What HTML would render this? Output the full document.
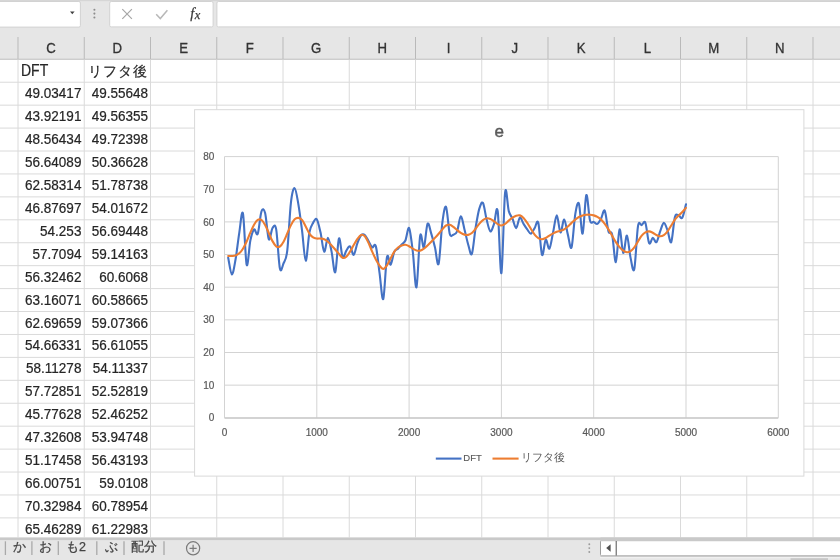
<!DOCTYPE html><html><head><meta charset="utf-8"><style>html,body{margin:0;padding:0;background:#fff;overflow:hidden}svg{display:block;filter:blur(0.3px)}text{font-family:"Liberation Sans", sans-serif}</style></head><body>
<svg width="840" height="560" viewBox="0 0 840 560">
<rect x="0" y="0" width="840" height="560" fill="#ffffff"/>
<rect x="0" y="0" width="840" height="59" fill="#e6e6e6"/>
<rect x="0" y="0" width="840" height="1.2" fill="#d6d6d6"/>
<rect x="-3" y="1.5" width="83.4" height="25.6" rx="1.5" fill="#ffffff" stroke="#d2d2d2" stroke-width="1"/>
<path d="M70,11.6 L74.6,11.6 L72.3,14.3 Z" fill="#404040"/>
<circle cx="94.4" cy="9.8" r="1.05" fill="#8c8c8c"/>
<circle cx="94.4" cy="13.6" r="1.05" fill="#8c8c8c"/>
<circle cx="94.4" cy="17.5" r="1.05" fill="#8c8c8c"/>
<rect x="109.7" y="1.5" width="103.4" height="25.4" rx="1.5" fill="#ffffff" stroke="#d2d2d2" stroke-width="1"/>
<path d="M122.3,9.2 L131.9,18.8 M131.9,9.2 L122.3,18.8" stroke="#a6a6a6" stroke-width="1.2" fill="none"/>
<path d="M156.2,14.3 L160.3,18.6 L167.4,10.2" stroke="#b8b8b8" stroke-width="1.5" fill="none"/>
<text x="190.2" y="18.0" font-size="14.5" font-style="italic" fill="#3a3a3a" stroke="#3a3a3a" stroke-width="0.25" style="font-family:'Liberation Serif',serif">f<tspan font-size="12.5" dx="0.6" dy="0.6">x</tspan></text>
<rect x="216.9" y="1.5" width="640" height="25.4" rx="1.5" fill="#ffffff" stroke="#d2d2d2" stroke-width="1"/>
<line x1="18.00" y1="37.0" x2="18.00" y2="59.2" stroke="#b9b9b9" stroke-width="1"/>
<line x1="84.25" y1="37.0" x2="84.25" y2="59.2" stroke="#b9b9b9" stroke-width="1"/>
<line x1="150.50" y1="37.0" x2="150.50" y2="59.2" stroke="#b9b9b9" stroke-width="1"/>
<line x1="216.75" y1="37.0" x2="216.75" y2="59.2" stroke="#b9b9b9" stroke-width="1"/>
<line x1="283.00" y1="37.0" x2="283.00" y2="59.2" stroke="#b9b9b9" stroke-width="1"/>
<line x1="349.25" y1="37.0" x2="349.25" y2="59.2" stroke="#b9b9b9" stroke-width="1"/>
<line x1="415.50" y1="37.0" x2="415.50" y2="59.2" stroke="#b9b9b9" stroke-width="1"/>
<line x1="481.75" y1="37.0" x2="481.75" y2="59.2" stroke="#b9b9b9" stroke-width="1"/>
<line x1="548.00" y1="37.0" x2="548.00" y2="59.2" stroke="#b9b9b9" stroke-width="1"/>
<line x1="614.25" y1="37.0" x2="614.25" y2="59.2" stroke="#b9b9b9" stroke-width="1"/>
<line x1="680.50" y1="37.0" x2="680.50" y2="59.2" stroke="#b9b9b9" stroke-width="1"/>
<line x1="746.75" y1="37.0" x2="746.75" y2="59.2" stroke="#b9b9b9" stroke-width="1"/>
<line x1="813.00" y1="37.0" x2="813.00" y2="59.2" stroke="#b9b9b9" stroke-width="1"/>
<text transform="translate(51.12,52.9) scale(1,1.12)" x="0" y="0" font-size="13.2" text-anchor="middle" fill="#333333" stroke="#333333" stroke-width="0.3">C</text>
<text transform="translate(117.38,52.9) scale(1,1.12)" x="0" y="0" font-size="13.2" text-anchor="middle" fill="#333333" stroke="#333333" stroke-width="0.3">D</text>
<text transform="translate(183.62,52.9) scale(1,1.12)" x="0" y="0" font-size="13.2" text-anchor="middle" fill="#333333" stroke="#333333" stroke-width="0.3">E</text>
<text transform="translate(249.88,52.9) scale(1,1.12)" x="0" y="0" font-size="13.2" text-anchor="middle" fill="#333333" stroke="#333333" stroke-width="0.3">F</text>
<text transform="translate(316.12,52.9) scale(1,1.12)" x="0" y="0" font-size="13.2" text-anchor="middle" fill="#333333" stroke="#333333" stroke-width="0.3">G</text>
<text transform="translate(382.38,52.9) scale(1,1.12)" x="0" y="0" font-size="13.2" text-anchor="middle" fill="#333333" stroke="#333333" stroke-width="0.3">H</text>
<text transform="translate(448.62,52.9) scale(1,1.12)" x="0" y="0" font-size="13.2" text-anchor="middle" fill="#333333" stroke="#333333" stroke-width="0.3">I</text>
<text transform="translate(514.88,52.9) scale(1,1.12)" x="0" y="0" font-size="13.2" text-anchor="middle" fill="#333333" stroke="#333333" stroke-width="0.3">J</text>
<text transform="translate(581.12,52.9) scale(1,1.12)" x="0" y="0" font-size="13.2" text-anchor="middle" fill="#333333" stroke="#333333" stroke-width="0.3">K</text>
<text transform="translate(647.38,52.9) scale(1,1.12)" x="0" y="0" font-size="13.2" text-anchor="middle" fill="#333333" stroke="#333333" stroke-width="0.3">L</text>
<text transform="translate(713.62,52.9) scale(1,1.12)" x="0" y="0" font-size="13.2" text-anchor="middle" fill="#333333" stroke="#333333" stroke-width="0.3">M</text>
<text transform="translate(779.88,52.9) scale(1,1.12)" x="0" y="0" font-size="13.2" text-anchor="middle" fill="#333333" stroke="#333333" stroke-width="0.3">N</text>
<line x1="0" y1="59.20" x2="840" y2="59.20" stroke="#bdbdbd" stroke-width="1.1"/>
<line x1="0" y1="82.23" x2="840" y2="82.23" stroke="#dadada" stroke-width="1"/>
<line x1="0" y1="105.16" x2="840" y2="105.16" stroke="#dadada" stroke-width="1"/>
<line x1="0" y1="128.09" x2="840" y2="128.09" stroke="#dadada" stroke-width="1"/>
<line x1="0" y1="151.02" x2="840" y2="151.02" stroke="#dadada" stroke-width="1"/>
<line x1="0" y1="173.95" x2="840" y2="173.95" stroke="#dadada" stroke-width="1"/>
<line x1="0" y1="196.88" x2="840" y2="196.88" stroke="#dadada" stroke-width="1"/>
<line x1="0" y1="219.81" x2="840" y2="219.81" stroke="#dadada" stroke-width="1"/>
<line x1="0" y1="242.74" x2="840" y2="242.74" stroke="#dadada" stroke-width="1"/>
<line x1="0" y1="265.67" x2="840" y2="265.67" stroke="#dadada" stroke-width="1"/>
<line x1="0" y1="288.60" x2="840" y2="288.60" stroke="#dadada" stroke-width="1"/>
<line x1="0" y1="311.53" x2="840" y2="311.53" stroke="#dadada" stroke-width="1"/>
<line x1="0" y1="334.46" x2="840" y2="334.46" stroke="#dadada" stroke-width="1"/>
<line x1="0" y1="357.39" x2="840" y2="357.39" stroke="#dadada" stroke-width="1"/>
<line x1="0" y1="380.32" x2="840" y2="380.32" stroke="#dadada" stroke-width="1"/>
<line x1="0" y1="403.25" x2="840" y2="403.25" stroke="#dadada" stroke-width="1"/>
<line x1="0" y1="426.18" x2="840" y2="426.18" stroke="#dadada" stroke-width="1"/>
<line x1="0" y1="449.11" x2="840" y2="449.11" stroke="#dadada" stroke-width="1"/>
<line x1="0" y1="472.04" x2="840" y2="472.04" stroke="#dadada" stroke-width="1"/>
<line x1="0" y1="494.97" x2="840" y2="494.97" stroke="#dadada" stroke-width="1"/>
<line x1="0" y1="517.90" x2="840" y2="517.90" stroke="#dadada" stroke-width="1"/>
<line x1="18.00" y1="59.70" x2="18.00" y2="537.50" stroke="#dadada" stroke-width="1"/>
<line x1="84.25" y1="59.70" x2="84.25" y2="537.50" stroke="#dadada" stroke-width="1"/>
<line x1="150.50" y1="59.70" x2="150.50" y2="537.50" stroke="#dadada" stroke-width="1"/>
<line x1="216.75" y1="59.70" x2="216.75" y2="537.50" stroke="#dadada" stroke-width="1"/>
<line x1="283.00" y1="59.70" x2="283.00" y2="537.50" stroke="#dadada" stroke-width="1"/>
<line x1="349.25" y1="59.70" x2="349.25" y2="537.50" stroke="#dadada" stroke-width="1"/>
<line x1="415.50" y1="59.70" x2="415.50" y2="537.50" stroke="#dadada" stroke-width="1"/>
<line x1="481.75" y1="59.70" x2="481.75" y2="537.50" stroke="#dadada" stroke-width="1"/>
<line x1="548.00" y1="59.70" x2="548.00" y2="537.50" stroke="#dadada" stroke-width="1"/>
<line x1="614.25" y1="59.70" x2="614.25" y2="537.50" stroke="#dadada" stroke-width="1"/>
<line x1="680.50" y1="59.70" x2="680.50" y2="537.50" stroke="#dadada" stroke-width="1"/>
<line x1="746.75" y1="59.70" x2="746.75" y2="537.50" stroke="#dadada" stroke-width="1"/>
<line x1="813.00" y1="59.70" x2="813.00" y2="537.50" stroke="#dadada" stroke-width="1"/>
<text transform="translate(21.0,75.70) scale(1,1.13)" font-size="14" fill="#262626" stroke="#262626" stroke-width="0.2">DFT</text>
<text x="88.0" y="75.90" font-size="13.5" letter-spacing="0.9" fill="#262626" stroke="#262626" stroke-width="0.2">リフタ後</text>
<text transform="translate(81.4,98.23) scale(0.965,1)" font-size="14" text-anchor="end" fill="#262626" stroke="#262626" stroke-width="0.22">49.03417</text>
<text transform="translate(148.1,98.23) scale(0.965,1)" font-size="14" text-anchor="end" fill="#262626" stroke="#262626" stroke-width="0.22">49.55648</text>
<text transform="translate(81.4,121.16) scale(0.965,1)" font-size="14" text-anchor="end" fill="#262626" stroke="#262626" stroke-width="0.22">43.92191</text>
<text transform="translate(148.1,121.16) scale(0.965,1)" font-size="14" text-anchor="end" fill="#262626" stroke="#262626" stroke-width="0.22">49.56355</text>
<text transform="translate(81.4,144.09) scale(0.965,1)" font-size="14" text-anchor="end" fill="#262626" stroke="#262626" stroke-width="0.22">48.56434</text>
<text transform="translate(148.1,144.09) scale(0.965,1)" font-size="14" text-anchor="end" fill="#262626" stroke="#262626" stroke-width="0.22">49.72398</text>
<text transform="translate(81.4,167.02) scale(0.965,1)" font-size="14" text-anchor="end" fill="#262626" stroke="#262626" stroke-width="0.22">56.64089</text>
<text transform="translate(148.1,167.02) scale(0.965,1)" font-size="14" text-anchor="end" fill="#262626" stroke="#262626" stroke-width="0.22">50.36628</text>
<text transform="translate(81.4,189.95) scale(0.965,1)" font-size="14" text-anchor="end" fill="#262626" stroke="#262626" stroke-width="0.22">62.58314</text>
<text transform="translate(148.1,189.95) scale(0.965,1)" font-size="14" text-anchor="end" fill="#262626" stroke="#262626" stroke-width="0.22">51.78738</text>
<text transform="translate(81.4,212.88) scale(0.965,1)" font-size="14" text-anchor="end" fill="#262626" stroke="#262626" stroke-width="0.22">46.87697</text>
<text transform="translate(148.1,212.88) scale(0.965,1)" font-size="14" text-anchor="end" fill="#262626" stroke="#262626" stroke-width="0.22">54.01672</text>
<text transform="translate(81.4,235.81) scale(0.965,1)" font-size="14" text-anchor="end" fill="#262626" stroke="#262626" stroke-width="0.22">54.253</text>
<text transform="translate(148.1,235.81) scale(0.965,1)" font-size="14" text-anchor="end" fill="#262626" stroke="#262626" stroke-width="0.22">56.69448</text>
<text transform="translate(81.4,258.74) scale(0.965,1)" font-size="14" text-anchor="end" fill="#262626" stroke="#262626" stroke-width="0.22">57.7094</text>
<text transform="translate(148.1,258.74) scale(0.965,1)" font-size="14" text-anchor="end" fill="#262626" stroke="#262626" stroke-width="0.22">59.14163</text>
<text transform="translate(81.4,281.67) scale(0.965,1)" font-size="14" text-anchor="end" fill="#262626" stroke="#262626" stroke-width="0.22">56.32462</text>
<text transform="translate(148.1,281.67) scale(0.965,1)" font-size="14" text-anchor="end" fill="#262626" stroke="#262626" stroke-width="0.22">60.6068</text>
<text transform="translate(81.4,304.60) scale(0.965,1)" font-size="14" text-anchor="end" fill="#262626" stroke="#262626" stroke-width="0.22">63.16071</text>
<text transform="translate(148.1,304.60) scale(0.965,1)" font-size="14" text-anchor="end" fill="#262626" stroke="#262626" stroke-width="0.22">60.58665</text>
<text transform="translate(81.4,327.53) scale(0.965,1)" font-size="14" text-anchor="end" fill="#262626" stroke="#262626" stroke-width="0.22">62.69659</text>
<text transform="translate(148.1,327.53) scale(0.965,1)" font-size="14" text-anchor="end" fill="#262626" stroke="#262626" stroke-width="0.22">59.07366</text>
<text transform="translate(81.4,350.46) scale(0.965,1)" font-size="14" text-anchor="end" fill="#262626" stroke="#262626" stroke-width="0.22">54.66331</text>
<text transform="translate(148.1,350.46) scale(0.965,1)" font-size="14" text-anchor="end" fill="#262626" stroke="#262626" stroke-width="0.22">56.61055</text>
<text transform="translate(81.4,373.39) scale(0.965,1)" font-size="14" text-anchor="end" fill="#262626" stroke="#262626" stroke-width="0.22">58.11278</text>
<text transform="translate(148.1,373.39) scale(0.965,1)" font-size="14" text-anchor="end" fill="#262626" stroke="#262626" stroke-width="0.22">54.11337</text>
<text transform="translate(81.4,396.32) scale(0.965,1)" font-size="14" text-anchor="end" fill="#262626" stroke="#262626" stroke-width="0.22">57.72851</text>
<text transform="translate(148.1,396.32) scale(0.965,1)" font-size="14" text-anchor="end" fill="#262626" stroke="#262626" stroke-width="0.22">52.52819</text>
<text transform="translate(81.4,419.25) scale(0.965,1)" font-size="14" text-anchor="end" fill="#262626" stroke="#262626" stroke-width="0.22">45.77628</text>
<text transform="translate(148.1,419.25) scale(0.965,1)" font-size="14" text-anchor="end" fill="#262626" stroke="#262626" stroke-width="0.22">52.46252</text>
<text transform="translate(81.4,442.18) scale(0.965,1)" font-size="14" text-anchor="end" fill="#262626" stroke="#262626" stroke-width="0.22">47.32608</text>
<text transform="translate(148.1,442.18) scale(0.965,1)" font-size="14" text-anchor="end" fill="#262626" stroke="#262626" stroke-width="0.22">53.94748</text>
<text transform="translate(81.4,465.11) scale(0.965,1)" font-size="14" text-anchor="end" fill="#262626" stroke="#262626" stroke-width="0.22">51.17458</text>
<text transform="translate(148.1,465.11) scale(0.965,1)" font-size="14" text-anchor="end" fill="#262626" stroke="#262626" stroke-width="0.22">56.43193</text>
<text transform="translate(81.4,488.04) scale(0.965,1)" font-size="14" text-anchor="end" fill="#262626" stroke="#262626" stroke-width="0.22">66.00751</text>
<text transform="translate(148.1,488.04) scale(0.965,1)" font-size="14" text-anchor="end" fill="#262626" stroke="#262626" stroke-width="0.22">59.0108</text>
<text transform="translate(81.4,510.97) scale(0.965,1)" font-size="14" text-anchor="end" fill="#262626" stroke="#262626" stroke-width="0.22">70.32984</text>
<text transform="translate(148.1,510.97) scale(0.965,1)" font-size="14" text-anchor="end" fill="#262626" stroke="#262626" stroke-width="0.22">60.78954</text>
<text transform="translate(81.4,533.90) scale(0.965,1)" font-size="14" text-anchor="end" fill="#262626" stroke="#262626" stroke-width="0.22">65.46289</text>
<text transform="translate(148.1,533.90) scale(0.965,1)" font-size="14" text-anchor="end" fill="#262626" stroke="#262626" stroke-width="0.22">61.22983</text>
<rect x="194.60" y="109.70" width="609.30" height="366.40" fill="#ffffff" stroke="#d9d9d9" stroke-width="1"/>
<text x="499.3" y="136.8" font-size="17" text-anchor="middle" fill="#595959" stroke="#595959" stroke-width="0.45">e</text>
<line x1="224.50" y1="385.15" x2="778.30" y2="385.15" stroke="#d3d3d3" stroke-width="1"/>
<line x1="224.50" y1="352.50" x2="778.30" y2="352.50" stroke="#d3d3d3" stroke-width="1"/>
<line x1="224.50" y1="319.85" x2="778.30" y2="319.85" stroke="#d3d3d3" stroke-width="1"/>
<line x1="224.50" y1="287.20" x2="778.30" y2="287.20" stroke="#d3d3d3" stroke-width="1"/>
<line x1="224.50" y1="254.55" x2="778.30" y2="254.55" stroke="#d3d3d3" stroke-width="1"/>
<line x1="224.50" y1="221.90" x2="778.30" y2="221.90" stroke="#d3d3d3" stroke-width="1"/>
<line x1="224.50" y1="189.25" x2="778.30" y2="189.25" stroke="#d3d3d3" stroke-width="1"/>
<line x1="224.50" y1="156.60" x2="778.30" y2="156.60" stroke="#d3d3d3" stroke-width="1"/>
<line x1="224.50" y1="156.60" x2="224.50" y2="417.80" stroke="#d3d3d3" stroke-width="1"/>
<line x1="316.80" y1="156.60" x2="316.80" y2="417.80" stroke="#d3d3d3" stroke-width="1"/>
<line x1="409.10" y1="156.60" x2="409.10" y2="417.80" stroke="#d3d3d3" stroke-width="1"/>
<line x1="501.40" y1="156.60" x2="501.40" y2="417.80" stroke="#d3d3d3" stroke-width="1"/>
<line x1="593.70" y1="156.60" x2="593.70" y2="417.80" stroke="#d3d3d3" stroke-width="1"/>
<line x1="686.00" y1="156.60" x2="686.00" y2="417.80" stroke="#d3d3d3" stroke-width="1"/>
<line x1="778.30" y1="156.60" x2="778.30" y2="417.80" stroke="#d3d3d3" stroke-width="1"/>
<line x1="224.50" y1="418.00" x2="778.30" y2="418.00" stroke="#c4c4c4" stroke-width="1.6"/>
<text x="214.4" y="421.40" font-size="10" text-anchor="end" fill="#595959" stroke="#595959" stroke-width="0.2">0</text>
<text x="214.4" y="388.75" font-size="10" text-anchor="end" fill="#595959" stroke="#595959" stroke-width="0.2">10</text>
<text x="214.4" y="356.10" font-size="10" text-anchor="end" fill="#595959" stroke="#595959" stroke-width="0.2">20</text>
<text x="214.4" y="323.45" font-size="10" text-anchor="end" fill="#595959" stroke="#595959" stroke-width="0.2">30</text>
<text x="214.4" y="290.80" font-size="10" text-anchor="end" fill="#595959" stroke="#595959" stroke-width="0.2">40</text>
<text x="214.4" y="258.15" font-size="10" text-anchor="end" fill="#595959" stroke="#595959" stroke-width="0.2">50</text>
<text x="214.4" y="225.50" font-size="10" text-anchor="end" fill="#595959" stroke="#595959" stroke-width="0.2">60</text>
<text x="214.4" y="192.85" font-size="10" text-anchor="end" fill="#595959" stroke="#595959" stroke-width="0.2">70</text>
<text x="214.4" y="160.20" font-size="10" text-anchor="end" fill="#595959" stroke="#595959" stroke-width="0.2">80</text>
<text x="224.50" y="435.9" font-size="10" text-anchor="middle" fill="#595959" stroke="#595959" stroke-width="0.2">0</text>
<text x="316.80" y="435.9" font-size="10" text-anchor="middle" fill="#595959" stroke="#595959" stroke-width="0.2">1000</text>
<text x="409.10" y="435.9" font-size="10" text-anchor="middle" fill="#595959" stroke="#595959" stroke-width="0.2">2000</text>
<text x="501.40" y="435.9" font-size="10" text-anchor="middle" fill="#595959" stroke="#595959" stroke-width="0.2">3000</text>
<text x="593.70" y="435.9" font-size="10" text-anchor="middle" fill="#595959" stroke="#595959" stroke-width="0.2">4000</text>
<text x="686.00" y="435.9" font-size="10" text-anchor="middle" fill="#595959" stroke="#595959" stroke-width="0.2">5000</text>
<text x="778.30" y="435.9" font-size="10" text-anchor="middle" fill="#595959" stroke="#595959" stroke-width="0.2">6000</text>
<path d="M228.19,257.70 C228.81,260.49 230.65,274.14 231.88,274.39 C233.11,274.65 234.35,266.16 235.58,259.24 C236.81,252.32 238.04,240.50 239.27,232.87 C240.50,225.24 241.73,208.15 242.96,213.47 C244.19,218.78 245.42,260.21 246.65,264.75 C247.88,269.28 249.11,246.56 250.34,240.66 C251.57,234.77 252.81,230.51 254.04,229.38 C255.27,228.25 256.50,236.87 257.73,233.90 C258.96,230.93 260.19,215.05 261.42,211.58 C262.65,208.11 263.88,208.47 265.11,213.10 C266.34,217.72 267.57,236.83 268.80,239.32 C270.03,241.82 271.27,229.73 272.50,228.06 C273.73,226.39 274.96,222.60 276.19,229.32 C277.42,236.03 278.65,262.68 279.88,268.34 C281.11,274.00 282.34,266.22 283.57,263.28 C284.80,260.34 286.03,260.88 287.26,250.71 C288.49,240.55 289.73,212.71 290.96,202.29 C292.19,191.86 293.42,187.88 294.65,188.17 C295.88,188.47 297.11,197.03 298.34,204.06 C299.57,211.10 300.80,220.94 302.03,230.39 C303.26,239.84 304.49,260.43 305.72,260.75 C306.95,261.08 308.19,238.66 309.42,232.35 C310.65,226.04 311.88,225.06 313.11,222.88 C314.34,220.70 315.57,217.71 316.80,219.29 C318.03,220.87 319.26,226.96 320.49,232.35 C321.72,237.74 322.95,250.69 324.18,251.61 C325.41,252.54 326.65,237.90 327.88,237.90 C329.11,237.90 330.34,245.90 331.57,251.61 C332.80,257.33 334.03,274.36 335.26,272.18 C336.49,270.00 337.72,241.05 338.95,238.55 C340.18,236.05 341.41,255.15 342.64,257.16 C343.87,259.18 345.11,252.43 346.34,250.63 C347.57,248.84 348.80,245.68 350.03,246.39 C351.26,247.09 352.49,255.42 353.72,254.88 C354.95,254.33 356.18,246.39 357.41,243.12 C358.64,239.86 359.87,236.65 361.10,235.29 C362.33,233.93 363.57,233.98 364.80,234.96 C366.03,235.94 367.26,239.10 368.49,241.16 C369.72,243.23 370.95,246.50 372.18,247.37 C373.41,248.24 374.64,242.09 375.87,246.39 C377.10,250.69 378.33,264.40 379.56,273.16 C380.79,281.92 382.03,301.62 383.26,298.95 C384.49,296.29 385.72,262.88 386.95,257.16 C388.18,251.45 389.41,265.60 390.64,264.67 C391.87,263.75 393.10,254.28 394.33,251.61 C395.56,248.95 396.79,249.87 398.02,248.67 C399.25,247.48 400.49,245.79 401.72,244.43 C402.95,243.07 404.18,243.23 405.41,240.51 C406.64,237.79 407.87,226.25 409.10,228.10 C410.33,229.95 411.56,241.76 412.79,251.61 C414.02,261.46 415.25,289.87 416.48,287.20 C417.71,284.53 418.95,242.25 420.18,235.61 C421.41,228.97 422.64,249.33 423.87,247.37 C425.10,245.41 426.33,226.14 427.56,223.86 C428.79,221.57 430.02,229.74 431.25,233.65 C432.48,237.57 433.71,242.36 434.94,247.37 C436.17,252.37 437.41,267.77 438.64,263.69 C439.87,259.61 441.10,232.35 442.33,222.88 C443.56,213.41 444.79,205.09 446.02,206.88 C447.25,208.68 448.48,229.03 449.71,233.65 C450.94,238.28 452.17,235.01 453.40,234.63 C454.63,234.25 455.87,234.42 457.10,231.37 C458.33,228.32 459.56,216.68 460.79,216.35 C462.02,216.02 463.25,224.73 464.48,229.41 C465.71,234.09 466.94,240.35 468.17,244.43 C469.40,248.51 470.63,256.62 471.86,253.90 C473.09,251.18 474.33,235.61 475.56,228.10 C476.79,220.59 478.02,213.03 479.25,208.84 C480.48,204.65 481.71,201.17 482.94,202.96 C484.17,204.76 485.40,214.88 486.63,219.61 C487.86,224.35 489.09,230.66 490.32,231.37 C491.55,232.08 492.79,227.23 494.02,223.86 C495.25,220.49 496.48,202.91 497.71,211.13 C498.94,219.34 500.17,276.26 501.40,273.16 C502.63,270.06 503.86,202.85 505.09,192.52 C506.32,182.18 507.55,206.77 508.78,211.13 C510.01,215.48 511.25,215.81 512.48,218.63 C513.71,221.46 514.94,228.27 516.17,228.10 C517.40,227.94 518.63,218.36 519.86,217.66 C521.09,216.95 522.32,221.90 523.55,223.86 C524.78,225.82 526.01,227.78 527.24,229.41 C528.47,231.04 529.71,233.87 530.94,233.65 C532.17,233.44 533.40,229.90 534.63,228.10 C535.86,226.31 537.09,218.42 538.32,222.88 C539.55,227.34 540.78,252.05 542.01,254.88 C543.24,257.71 544.47,240.89 545.70,239.86 C546.93,238.82 548.17,249.92 549.40,248.67 C550.63,247.42 551.86,237.90 553.09,232.35 C554.32,226.80 555.55,215.37 556.78,215.37 C558.01,215.37 559.24,231.64 560.47,232.35 C561.70,233.06 562.93,219.23 564.16,219.61 C565.39,220.00 566.63,230.01 567.86,234.63 C569.09,239.26 570.32,250.74 571.55,247.37 C572.78,243.99 574.01,221.68 575.24,214.39 C576.47,207.10 577.70,200.41 578.93,203.62 C580.16,206.83 581.39,235.07 582.62,233.65 C583.85,232.24 585.09,197.30 586.32,195.13 C587.55,192.95 588.78,216.13 590.01,220.59 C591.24,225.06 592.47,221.36 593.70,221.90 C594.93,222.44 596.16,224.40 597.39,223.86 C598.62,223.31 599.85,220.81 601.08,218.63 C602.31,216.46 603.55,208.68 604.78,210.80 C606.01,212.92 607.24,227.40 608.47,231.37 C609.70,235.34 610.93,229.52 612.16,234.63 C613.39,239.75 614.62,262.93 615.85,262.06 C617.08,261.19 618.31,230.93 619.54,229.41 C620.77,227.89 622.01,251.88 623.24,252.92 C624.47,253.95 625.70,234.74 626.93,235.61 C628.16,236.48 629.39,252.59 630.62,258.14 C631.85,263.69 633.08,274.25 634.31,268.92 C635.54,263.58 636.77,233.44 638.00,226.14 C639.23,218.85 640.47,225.71 641.70,225.16 C642.93,224.62 644.16,219.89 645.39,222.88 C646.62,225.87 647.85,240.62 649.08,243.12 C650.31,245.63 651.54,238.06 652.77,237.90 C654.00,237.74 655.23,243.23 656.46,242.14 C657.69,241.05 658.93,234.58 660.16,231.37 C661.39,228.16 662.62,223.04 663.85,222.88 C665.08,222.72 666.31,227.18 667.54,230.39 C668.77,233.60 670.00,244.37 671.23,242.14 C672.46,239.91 673.69,221.46 674.92,217.00 C676.15,212.54 677.39,215.26 678.62,215.37 C679.85,215.48 681.08,219.51 682.31,217.66 C683.54,215.81 685.38,206.50 686.00,204.27" fill="none" stroke="#4472c4" stroke-width="2.1" stroke-linejoin="round" stroke-linecap="round"/>
<path d="M228.19,256.00 C228.81,255.99 230.65,256.07 231.88,255.98 C233.11,255.88 234.35,255.89 235.58,255.45 C236.81,255.01 238.04,254.48 239.27,253.35 C240.50,252.23 241.73,250.70 242.96,248.71 C244.19,246.73 245.42,244.11 246.65,241.44 C247.88,238.77 249.11,235.48 250.34,232.69 C251.57,229.90 252.81,226.83 254.04,224.70 C255.27,222.57 256.50,220.71 257.73,219.92 C258.96,219.13 260.19,219.15 261.42,219.98 C262.65,220.82 263.88,222.76 265.11,224.92 C266.34,227.09 267.57,230.27 268.80,232.97 C270.03,235.67 271.27,238.90 272.50,241.12 C273.73,243.34 274.96,245.40 276.19,246.30 C277.42,247.19 278.65,247.28 279.88,246.51 C281.11,245.74 282.34,243.82 283.57,241.66 C284.80,239.50 286.03,236.31 287.26,233.55 C288.49,230.79 289.73,227.50 290.96,225.13 C292.19,222.76 293.42,220.53 294.65,219.32 C295.88,218.11 297.11,217.78 298.34,217.88 C299.57,217.99 300.80,218.51 302.03,219.94 C303.26,221.37 304.49,224.17 305.72,226.45 C306.95,228.74 308.19,231.81 309.42,233.65 C310.65,235.49 311.88,236.68 313.11,237.49 C314.34,238.31 315.57,238.37 316.80,238.55 C318.03,238.73 319.26,238.45 320.49,238.56 C321.72,238.67 322.95,238.68 324.18,239.20 C325.41,239.73 326.65,240.67 327.88,241.70 C329.11,242.74 330.34,244.12 331.57,245.41 C332.80,246.70 334.03,248.02 335.26,249.44 C336.49,250.85 337.72,252.50 338.95,253.90 C340.18,255.29 341.41,257.35 342.64,257.81 C343.87,258.28 345.11,257.74 346.34,256.71 C347.57,255.67 348.80,253.55 350.03,251.61 C351.26,249.67 352.49,247.21 353.72,245.08 C354.95,242.96 356.18,240.57 357.41,238.88 C358.64,237.19 359.87,235.40 361.10,234.96 C362.33,234.52 363.57,234.95 364.80,236.27 C366.03,237.58 367.26,240.29 368.49,242.85 C369.72,245.41 370.95,248.85 372.18,251.61 C373.41,254.38 374.64,257.10 375.87,259.44 C377.10,261.78 378.33,264.07 379.56,265.65 C380.79,267.23 382.03,268.97 383.26,268.92 C384.49,268.86 385.72,267.09 386.95,265.32 C388.18,263.56 389.41,260.64 390.64,258.35 C391.87,256.07 393.10,253.43 394.33,251.61 C395.56,249.80 396.79,248.49 398.02,247.46 C399.25,246.43 400.49,245.86 401.72,245.41 C402.95,244.96 404.18,244.62 405.41,244.75 C406.64,244.89 407.87,245.58 409.10,246.23 C410.33,246.89 411.56,247.97 412.79,248.67 C414.02,249.38 415.25,250.14 416.48,250.47 C417.71,250.79 418.95,250.93 420.18,250.63 C421.41,250.33 422.64,249.55 423.87,248.68 C425.10,247.81 426.33,246.56 427.56,245.41 C428.79,244.26 430.02,243.01 431.25,241.76 C432.48,240.51 433.71,239.23 434.94,237.90 C436.17,236.57 437.41,235.21 438.64,233.79 C439.87,232.38 441.10,230.79 442.33,229.41 C443.56,228.03 444.79,226.25 446.02,225.49 C447.25,224.73 448.48,224.60 449.71,224.84 C450.94,225.07 452.17,226.04 453.40,226.91 C454.63,227.78 455.87,229.07 457.10,230.06 C458.33,231.05 459.56,232.10 460.79,232.86 C462.02,233.62 463.25,234.30 464.48,234.63 C465.71,234.97 466.94,235.16 468.17,234.89 C469.40,234.61 470.63,234.02 471.86,233.00 C473.09,231.98 474.33,230.31 475.56,228.78 C476.79,227.26 478.02,225.31 479.25,223.86 C480.48,222.41 481.71,221.00 482.94,220.08 C484.17,219.15 485.40,218.50 486.63,218.31 C487.86,218.12 489.09,218.43 490.32,218.92 C491.55,219.41 492.79,220.38 494.02,221.25 C495.25,222.11 496.48,223.41 497.71,224.12 C498.94,224.83 500.17,225.54 501.40,225.49 C502.63,225.44 503.86,224.65 505.09,223.83 C506.32,223.02 507.55,221.62 508.78,220.59 C510.01,219.56 511.25,218.47 512.48,217.66 C513.71,216.84 514.94,216.08 516.17,215.70 C517.40,215.32 518.63,215.00 519.86,215.37 C521.09,215.74 522.32,216.69 523.55,217.94 C524.78,219.19 526.01,221.03 527.24,222.88 C528.47,224.73 529.71,227.06 530.94,229.02 C532.17,230.98 533.40,233.11 534.63,234.63 C535.86,236.15 537.09,237.39 538.32,238.15 C539.55,238.91 540.78,239.23 542.01,239.20 C543.24,239.18 544.47,238.58 545.70,237.98 C546.93,237.38 548.17,236.39 549.40,235.61 C550.63,234.84 551.86,233.98 553.09,233.33 C554.32,232.68 555.55,232.12 556.78,231.69 C558.01,231.27 559.24,231.16 560.47,230.78 C561.70,230.40 562.93,230.12 564.16,229.41 C565.39,228.70 566.63,227.61 567.86,226.52 C569.09,225.43 570.32,224.04 571.55,222.88 C572.78,221.72 574.01,220.54 575.24,219.56 C576.47,218.58 577.70,217.69 578.93,217.00 C580.16,216.32 581.39,215.81 582.62,215.43 C583.85,215.05 585.09,214.84 586.32,214.72 C587.55,214.59 588.78,214.58 590.01,214.69 C591.24,214.80 592.47,215.00 593.70,215.37 C594.93,215.74 596.16,216.18 597.39,216.89 C598.62,217.60 599.85,218.46 601.08,219.61 C602.31,220.77 603.55,222.21 604.78,223.84 C606.01,225.47 607.24,227.40 608.47,229.41 C609.70,231.41 610.93,233.75 612.16,235.87 C613.39,238.00 614.62,240.26 615.85,242.14 C617.08,244.02 618.31,245.74 619.54,247.16 C620.77,248.57 622.01,249.78 623.24,250.63 C624.47,251.48 625.70,252.17 626.93,252.26 C628.16,252.36 629.39,252.02 630.62,251.21 C631.85,250.39 633.08,249.01 634.31,247.37 C635.54,245.73 636.77,243.32 638.00,241.36 C639.23,239.40 640.47,237.11 641.70,235.61 C642.93,234.11 644.16,233.06 645.39,232.35 C646.62,231.64 647.85,231.31 649.08,231.37 C650.31,231.43 651.54,232.11 652.77,232.71 C654.00,233.31 655.23,234.37 656.46,234.96 C657.69,235.55 658.93,236.24 660.16,236.27 C661.39,236.29 662.62,235.95 663.85,235.13 C665.08,234.31 666.31,232.97 667.54,231.37 C668.77,229.76 670.00,227.46 671.23,225.51 C672.46,223.55 673.69,221.29 674.92,219.61 C676.15,217.94 677.39,216.72 678.62,215.47 C679.85,214.22 681.08,213.37 682.31,212.10 C683.54,210.84 685.38,208.57 686.00,207.86" fill="none" stroke="#ed7d31" stroke-width="2.1" stroke-linejoin="round" stroke-linecap="round"/>
<line x1="435.8" y1="458.6" x2="461.5" y2="458.6" stroke="#4472c4" stroke-width="2.1"/>
<text x="463.3" y="461.1" font-size="9.5" fill="#595959" stroke="#595959" stroke-width="0.15">DFT</text>
<line x1="492.5" y1="458.6" x2="518.6" y2="458.6" stroke="#ed7d31" stroke-width="2.1"/>
<text x="520.8" y="460.8" font-size="11" letter-spacing="0.2" fill="#595959">リフタ後</text>
<rect x="0" y="537.50" width="840" height="22.50" fill="#e6e6e6"/>
<rect x="0" y="537.50" width="840" height="2.6" fill="#c9c9c9"/>
<line x1="5.40" y1="541.3" x2="5.40" y2="555" stroke="#a9a9a9" stroke-width="1.3"/>
<line x1="31.90" y1="541.3" x2="31.90" y2="555" stroke="#a9a9a9" stroke-width="1.3"/>
<line x1="58.30" y1="541.3" x2="58.30" y2="555" stroke="#a9a9a9" stroke-width="1.3"/>
<line x1="96.80" y1="541.3" x2="96.80" y2="555" stroke="#a9a9a9" stroke-width="1.3"/>
<line x1="124.00" y1="541.3" x2="124.00" y2="555" stroke="#a9a9a9" stroke-width="1.3"/>
<line x1="164.00" y1="541.3" x2="164.00" y2="555" stroke="#a9a9a9" stroke-width="1.3"/>
<text x="13.10" y="551.2" font-size="12.5" fill="#444444" stroke="#444444" stroke-width="0.25">か</text>
<text x="39.30" y="551.2" font-size="12.5" fill="#444444" stroke="#444444" stroke-width="0.25">お</text>
<text x="66.00" y="551.2" font-size="12.5" fill="#444444" stroke="#444444" stroke-width="0.25">も2</text>
<text x="105.00" y="551.2" font-size="12.5" fill="#444444" stroke="#444444" stroke-width="0.25">ぶ</text>
<text x="131.10" y="551.2" font-size="12.5" fill="#444444" stroke="#444444" stroke-width="0.25">配分</text>
<circle cx="193.1" cy="548.3" r="6.6" fill="none" stroke="#7a7a7a" stroke-width="1.2"/>
<path d="M189.5,548.3 L196.7,548.3 M193.1,544.7 L193.1,551.9" stroke="#7a7a7a" stroke-width="1.2"/>
<circle cx="589.3" cy="544.3" r="0.95" fill="#9a9a9a"/>
<circle cx="589.3" cy="548.1" r="0.95" fill="#9a9a9a"/>
<circle cx="589.3" cy="552.0" r="0.95" fill="#9a9a9a"/>
<rect x="600.5" y="540.6" width="260" height="15" fill="#ffffff" stroke="#9c9c9c" stroke-width="1" rx="1"/>
<rect x="600.5" y="537.5" width="240" height="3.6" fill="#c9c9c9"/>
<rect x="600.5" y="555.2" width="240" height="2" fill="#c9c9c9"/>
<rect x="600" y="557.2" width="240" height="1" fill="#f4f4f4"/>
<line x1="616.2" y1="541" x2="616.2" y2="555.5" stroke="#505050" stroke-width="1"/>
<path d="M606.2,548 L610.6,544.3 L610.6,551.7 Z" fill="#505050"/>
<rect x="790.5" y="558.2" width="37.5" height="2" fill="#c6c6c6"/>
</svg></body></html>
